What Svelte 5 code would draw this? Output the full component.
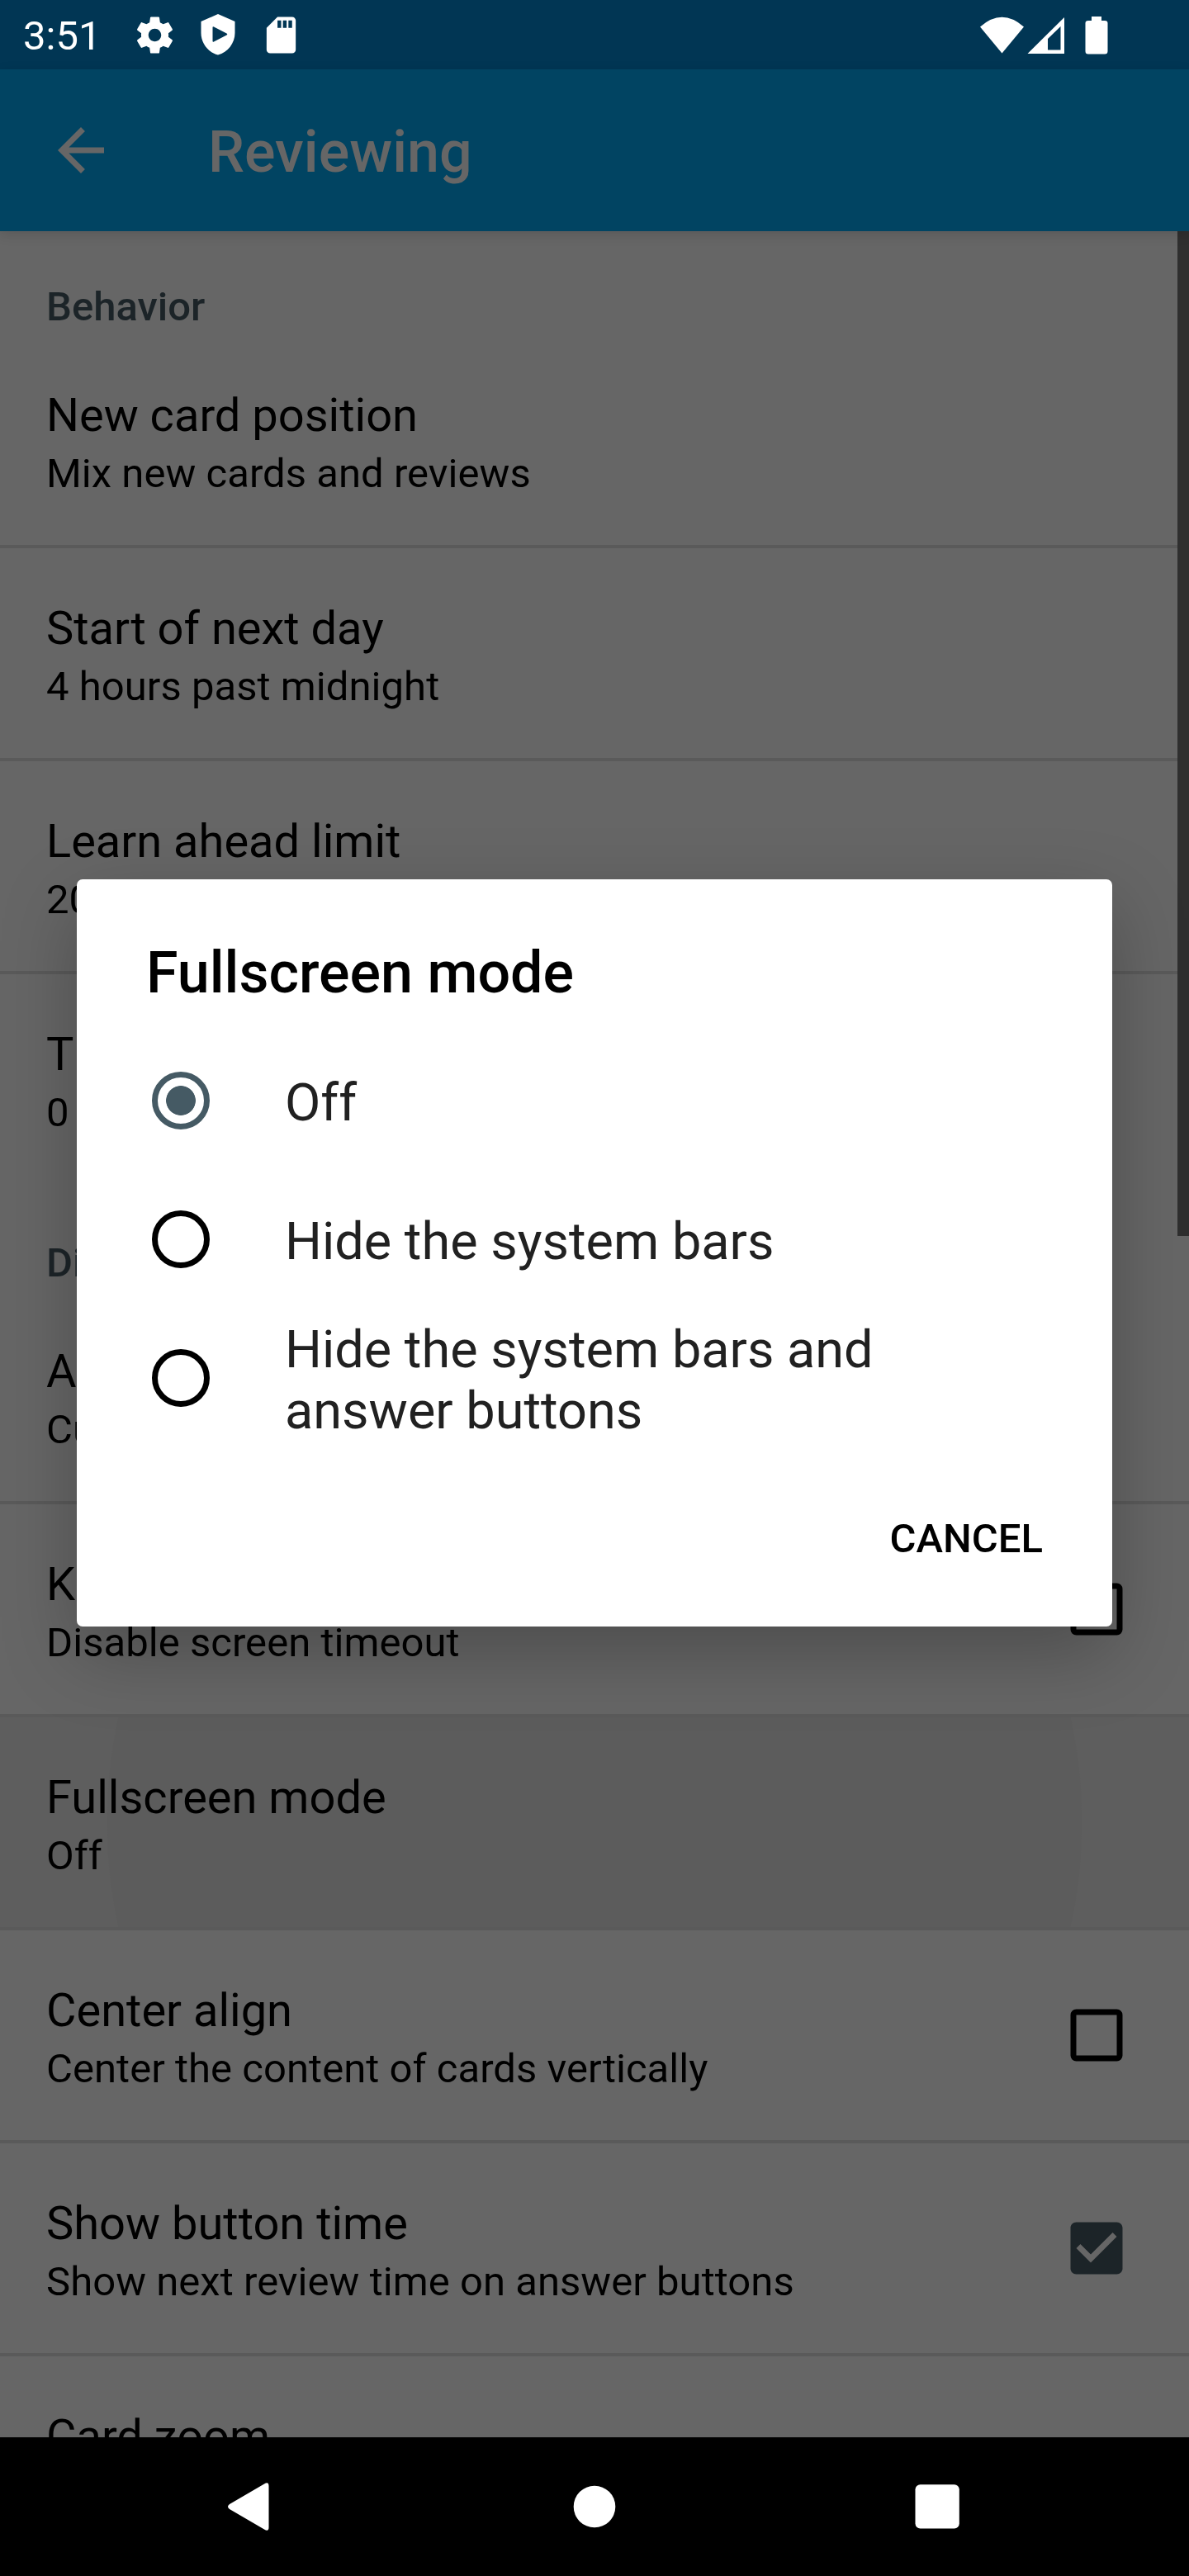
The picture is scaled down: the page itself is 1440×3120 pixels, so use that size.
<script>
  const sections = [
    {
      name: 'Behavior',
      rows: [
        { title: 'New card position', summary: 'Mix new cards and reviews' },
        { title: 'Start of next day', summary: '4 hours past midnight' },
        { title: 'Learn ahead limit', summary: '20 minutes' },
        { title: 'Timebox time limit', summary: '0 minutes' },
      ],
    },
    {
      name: 'Display',
      rows: [
        { title: 'App theme', summary: 'Customize' },
        { title: 'Keep screen on', summary: 'Disable screen timeout', check: 'off' },
        { title: 'Fullscreen mode', summary: 'Off', pressed: true },
        { title: 'Center align', summary: 'Center the content of cards vertically', check: 'off' },
        { title: 'Show button time', summary: 'Show next review time on answer buttons', check: 'on' },
        { title: 'Card zoom', summary: '' },
      ],
    },
  ];

  const options = ['Off', 'Hide the system bars', 'Hide the system bars and answer buttons'];
  let selected = $state(0);
</script>

<div class="screen">
  <div class="status">
    <span class="time">3:51</span>
    <svg class="gear" viewBox="0 0 24 24"><path d="M19.43 12.98c.04-.32.07-.64.07-.98s-.03-.66-.07-.98l2.11-1.65c.19-.15.24-.42.12-.64l-2-3.46c-.12-.22-.39-.3-.61-.22l-2.49 1c-.52-.4-1.08-.73-1.69-.98l-.38-2.65C14.46 2.18 14.25 2 14 2h-4c-.25 0-.46.18-.49.42l-.38 2.65c-.61.25-1.17.59-1.69.98l-2.49-1c-.23-.09-.49 0-.61.22l-2 3.46c-.13.22-.07.49.12.64l2.11 1.65c-.04.32-.07.65-.07.98s.03.66.07.98l-2.11 1.65c-.19.15-.24.42-.12.64l2 3.46c.12.22.39.3.61.22l2.49-1c.52.4 1.08.73 1.69.98l.38 2.65c.03.24.24.42.49.42h4c.25 0 .46-.18.49-.42l.38-2.65c.61-.25 1.17-.59 1.69-.98l2.49 1c.23.09.49 0 .61-.22l2-3.46c.12-.22.07-.49-.12-.64l-2.11-1.65zM12 15.5c-1.93 0-3.5-1.57-3.5-3.5s1.57-3.5 3.5-3.5 3.5 1.57 3.5 3.5-1.57 3.5-3.5 3.5z" /></svg>
    <svg class="shield" viewBox="0 0 42 50"><path fill-rule="evenodd" d="M21 0 41.500 9V23C41.500 35 33 46.500 21 49.500 9 46.500.5 35 .5 23V9ZM16 15.500Q14.500 14.600 14.500 16.500V32.500Q14.500 34.400 16 33.500L31.500 25.500Q33 24.500 31.500 23.500Z" /></svg>
    <svg class="sd" viewBox="0 0 24 24"><path d="M18 2h-8L4.020 8 4 20c0 1.100.9 2 2 2h12c1.100 0 2-.9 2-2V4c0-1.100-.9-2-2-2zm-6 6h-2V4h2v4zm3 0h-2V4h2v4zm3 0h-2V4h2v4z" /></svg>
    <span class="grow"></span>
    <svg class="signals" viewBox="0 0 156 50">
      <path d="M1 13.500Q27.500 -10 54 13.500L27.500 45.500Z" />
      <path fill-rule="evenodd" d="M58.500 46 103 2V46ZM83 28V41.500H98.500V13Z" />
      <path d="M136 1H148V6H152Q155.500 6 155.500 9V43Q155.500 46.500 152 46.500H132Q128.500 46.500 128.500 43V9Q128.500 6 132 6H136Z" />
    </svg>
  </div>

  <header>
    <svg viewBox="0 0 24 24"><path d="M20 11H7.830l5.590-5.590L12 4l-8 8 8 8 1.410-1.410L7.830 13H20v-2z" /></svg>
    <h1>Reviewing</h1>
  </header>

  <main>
    {#each sections as section}
      <section>
        <h2>{section.name}</h2>
        {#each section.rows as row}
          <div class="row" class:pressed={row.pressed}>
            <div class="text">
              <div class="title">{row.title}</div>
              <div class="summary">{row.summary}</div>
            </div>
            {#if row.check === 'off'}
              <svg class="box" viewBox="0 0 24 24"><rect x="4" y="4" width="16" height="16" rx="1" fill="none" stroke="#000" stroke-width="2" /></svg>
            {:else if row.check === 'on'}
              <svg class="box" viewBox="0 0 24 24"><path fill="#1c2428" d="M19 3H5c-1.110 0-2 .9-2 2v14c0 1.100.89 2 2 2h14c1.110 0 2-.9 2-2V5c0-1.100-.89-2-2-2zm-9 14l-5-5 1.410-1.410L10 14.170l7.590-7.590L19 8l-9 9z" /></svg>
            {/if}
          </div>
        {/each}
      </section>
    {/each}
    <div class="thumb"></div>
  </main>

  <nav>
    <svg viewBox="0 0 84 84"><path d="M57 14.500Q62.500 11 62.500 17V67Q62.500 73 57 69.500L15 45Q11 42 15 39Z" /></svg>
    <svg viewBox="0 0 84 84"><circle cx="42" cy="42" r="25.300" /></svg>
    <svg viewBox="0 0 84 84"><rect x="15.500" y="15.300" width="53.300" height="53.300" rx="6" /></svg>
  </nav>

  <div class="dialog" role="dialog" aria-label="Fullscreen mode">
    <h3>Fullscreen mode</h3>
    {#each options as option, i}
      <button class="option" onclick={() => (selected = i)}>
        <span class="radio" class:on={selected === i}></span>
        <span class="label">{option}</span>
      </button>
    {/each}
    <div class="actions"><button class="cancel">CANCEL</button></div>
  </div>
</div>

<style>
  :global(body) {
    margin: 0;
  }
  .screen {
    position: relative;
    display: flex;
    flex-direction: column;
    width: 1440px;
    height: 3120px;
    overflow: hidden;
    background: #666;
    color: #000;
    font-family: Roboto, sans-serif;
  }
  svg {
    display: block;
    flex: none;
  }
  h1, h2, h3 {
    margin: 0;
    font-weight: 500;
  }
  .status {
    flex: none;
    display: flex;
    align-items: center;
    box-sizing: border-box;
    height: 84px;
    padding: 0 98px 0 28px;
    background: #013654;
    color: #fff;
    fill: #fff;
  }
  .time {
    width: 133px;
    font-size: 49px;
    line-height: 58px;
    padding-top: 3px;
  }
  .gear {
    width: 53px;
    height: 53px;
  }
  .shield {
    width: 42px;
    height: 50px;
    margin-left: 29px;
  }
  .sd {
    width: 53px;
    height: 53px;
    margin-left: 29px;
  }
  .grow {
    flex: 1;
  }
  .signals {
    width: 156px;
    height: 50px;
    padding-top: 3px;
  }
  header {
    flex: none;
    position: relative;
    z-index: 1;
    display: flex;
    align-items: center;
    height: 196px;
    padding-left: 56px;
    background: #014462;
    color: #666;
    fill: #666;
    box-shadow: 0 4px 14px rgba(0, 0, 0, 0.13);
  }
  header svg {
    width: 84px;
    height: 84px;
  }
  h1 {
    margin-left: 112px;
    padding-top: 4px;
    font-size: 70px;
    line-height: 82px;
  }
  main {
    position: relative;
    flex: 1;
    min-height: 0;
    overflow: hidden;
  }
  .thumb {
    position: absolute;
    top: 0;
    right: 0;
    width: 14px;
    height: 1217px;
    background: #2f2f2f;
  }
  h2 {
    padding: 63px 56px 5px;
    font-size: 49px;
    line-height: 58px;
    color: #1c2428;
  }
  .row {
    display: flex;
    align-items: center;
    justify-content: space-between;
    height: 254px;
    padding: 0 70px 0 56px;
    border-bottom: 4px solid #5a5a5a;
  }
  .row:last-child {
    border-color: transparent;
  }
  /* Touch ripple spreading from the middle of the row */
  .row.pressed {
    background: radial-gradient(circle at 720px 50%, #5c5c5c 590px, #5e5e5e 591px);
  }
  .title {
    padding-top: 6px;
    font-size: 56px;
    line-height: 66px;
  }
  .summary {
    min-height: 58px;
    margin-top: 9px;
    margin-bottom: -1px;
    font-size: 49px;
    letter-spacing: 0.04px;
    line-height: 58px;
  }
  .box {
    width: 84px;
    height: 84px;
  }
  nav {
    flex: none;
    display: flex;
    align-items: center;
    justify-content: space-between;
    height: 168px;
    padding: 0 263px;
    background: #000;
    fill: #fff;
  }
  nav svg {
    width: 84px;
    height: 84px;
  }
  .dialog {
    position: absolute;
    z-index: 2;
    left: 93px;
    top: 1065px;
    box-sizing: border-box;
    width: 1254px;
    height: 905px;
    padding-top: 72px;
    border-radius: 7px;
    background: #fff;
    box-shadow: 0 32px 90px rgba(0, 0, 0, 0.25);
  }
  h3 {
    padding: 0 84px;
    margin-bottom: 30px;
    font-size: 70px;
    line-height: 82px;
  }
  button {
    border: 0;
    background: none;
    font: inherit;
    text-align: left;
  }
  .option {
    display: flex;
    align-items: center;
    width: 100%;
    height: 168px;
    padding: 0 84px 0 91px;
  }
  .radio {
    flex: none;
    box-sizing: border-box;
    width: 70px;
    height: 70px;
    border: 7px solid #000;
    border-radius: 50%;
  }
  .radio.on {
    border-color: #455a64;
    background: radial-gradient(circle closest-side, #455a64 0 17.500px, transparent 18.200px);
  }
  .label {
    width: 850px;
    margin-left: 91px;
    padding-top: 6px;
    color: #212121;
    font-size: 63px;
    line-height: 74px;
  }
  .actions {
    display: flex;
    justify-content: flex-end;
    padding: 82px 84px 0;
  }
  .cancel {
    padding: 0;
    color: #000;
    font-size: 49px;
    font-weight: 500;
    line-height: 58px;
  }
</style>
